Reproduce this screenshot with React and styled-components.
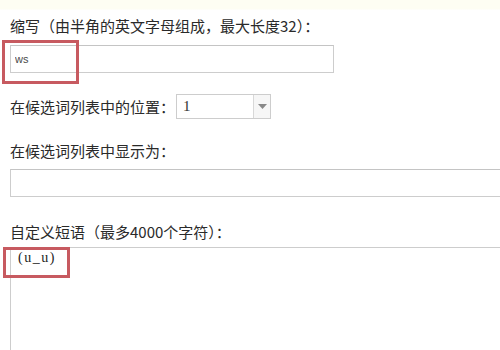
import React from 'react'
import styled, { createGlobalStyle } from 'styled-components'

const GlobalStyle = createGlobalStyle`
    html, body {
        margin: 0;
        padding: 0;
        background: #fff;
        overflow: hidden;
    }
    body {
        font-family: "Noto Sans CJK SC", "Noto Sans", sans-serif;
        color: #2a2a2a;
    }
`;

const Page = styled.div`
    position: relative;
    width: 500px;
    height: 350px;
    overflow: hidden;
    padding: 16px 0 0 10px;
    box-sizing: border-box;
    background: linear-gradient(#fefef3 0, #fefef3 9px, #fff 10px);
`;

const Field = styled.div`
    margin-bottom: ${p => p.gap || 0}px;
`;

const Label = styled.div`
    font-size: 15px;
    line-height: 20px;
    height: 20px;
    white-space: nowrap;
    margin-bottom: ${p => p.space || 0}px;
`;

const TextInput = styled.input`
    display: block;
    box-sizing: border-box;
    width: ${p => p.w};
    height: 28px;
    border: 1px solid #cdcdcd;
    border-top-color: #c4c4c4;
    padding: 0 4px;
    margin: 0;
    font-family: "Liberation Sans", Arial, sans-serif;
    font-size: 11px;
    color: #4a4a4a;
    outline: none;
    background: #fff;
`;

const Row = styled.div`
    display: flex;
    align-items: center;
    gap: 1px;
`;

const Select = styled.div`
    display: flex;
    width: 95px;
    height: 25px;
    box-sizing: border-box;
    border: 1px solid #cdcdcd;
    background: #fff;
`;

const SelectValue = styled.div`
    flex: 1;
    padding-left: 6px;
    font-family: "Liberation Serif", serif;
    font-size: 15px;
    line-height: 23px;
    color: #333;
`;

const SelectButton = styled.div`
    width: 16px;
    border-left: 1px solid #d8d8d8;
    background: #f6f6f6;
    display: flex;
    align-items: center;
    justify-content: center;
`;

const TextArea = styled.textarea`
    display: block;
    box-sizing: border-box;
    width: 510px;
    height: 160px;
    border: 1px solid #cdcdcd;
    padding: 2px 7px;
    margin: 0;
    resize: none;
    font-family: "Liberation Serif", serif;
    font-size: 14px;
    letter-spacing: 1.5px;
    color: #222;
    outline: none;
`;

const Mark = styled.div`
    position: absolute;
    left: ${p => p.x}px;
    top: ${p => p.y}px;
    width: ${p => p.w}px;
    height: ${p => p.h}px;
    box-sizing: border-box;
    border: 3px solid #c75a60;
    pointer-events: none;
`;

export default function App() {
    return (
        <>
            <GlobalStyle />
            <Page>
                <Field gap={21}>
                    <Label space={9}>缩写（由半角的英文字母组成，最大长度32）：</Label>
                    <TextInput w="324px" value="ws" readOnly />
                </Field>
                <Field gap={22}>
                    <Row>
                        <Label>在候选词列表中的位置：</Label>
                        <Select>
                            <SelectValue>1</SelectValue>
                            <SelectButton>
                                <svg width="9" height="5" viewBox="0 0 9 5">
                                    <path d="M0 0 L9 0 L4.5 5 Z" fill="#888" />
                                </svg>
                            </SelectButton>
                        </Select>
                    </Row>
                </Field>
                <Field gap={25}>
                    <Label space={8}>在候选词列表中显示为：</Label>
                    <TextInput w="510px" value="" readOnly />
                </Field>
                <Field>
                    <Label space={5}>自定义短语（最多4000个字符）：</Label>
                    <TextArea value="(u_u)" readOnly />
                </Field>
                <Mark x={2} y={40} w={77} h={44} />
                <Mark x={3} y={247} w={67} h={31} />
            </Page>
        </>
    )
}
